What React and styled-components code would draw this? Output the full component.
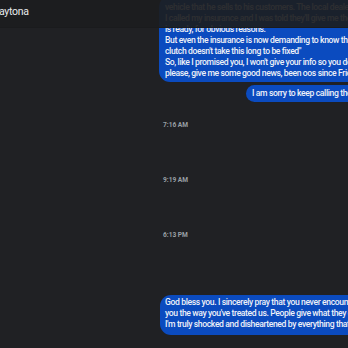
import React from "react";
import styled, { createGlobalStyle } from "styled-components";

const GlobalStyle = createGlobalStyle`
  html, body {
    margin: 0;
    padding: 0;
    background: #202124;
  }
  body {
    font-family: Roboto, "Noto Sans", sans-serif;
  }
`;

const topLines = [
  "vehicle that he sells to his customers. The local dealer already told me",
  "I called my insurance and I was told they'll give me the car back",
  "is ready, for obvious reasons.",
  "But even the insurance is now demanding to know the last update",
  "clutch doesn't take this long to be fixed\"",
  "So, like I promised you, I won't give your info so you don't get",
  "please, give me some good news, been oos since Friday",
];

const lastLines = [
  "God bless you. I sincerely pray that you never encounter anyone who treats",
  "you the way you've treated us. People give what they can give and",
  "I'm truly shocked and disheartened by everything that just happened",
];

function App() {
  return (
    <>
      <GlobalStyle />
      <Screen>
        <Header>
          <Title>aytona</Title>
        </Header>
        <Thread>
          <Bubble $kind="top">
            {topLines.map((l) => (
              <Line key={l}>{l}</Line>
            ))}
          </Bubble>
          <Bubble $kind="short">
            <Line>I am sorry to keep calling the shop about this</Line>
          </Bubble>
          <Stamp $gap={18.5}>7:16 AM</Stamp>
          <Stamp $gap={46}>9:19 AM</Stamp>
          <Stamp $gap={46}>6:13 PM</Stamp>
          <Bubble $kind="last">
            {lastLines.map((l) => (
              <Line key={l}>{l}</Line>
            ))}
          </Bubble>
        </Thread>
      </Screen>
    </>
  );
}

const Screen = styled.div`
  position: relative;
  width: 348px;
  height: 348px;
  overflow: hidden;
  background: #202124;
`;

const Header = styled.div`
  position: absolute;
  top: 0;
  left: 0;
  right: 0;
  height: 27px;
  background: rgba(28, 29, 32, 0.92);
  border-bottom: 1px solid #1a1b1d;
  display: flex;
  align-items: center;
  z-index: 2;
`;

const Title = styled.div`
  margin-left: -1px;
  margin-top: -5px;
  color: #e8eaed;
  font-size: 10.5px;
  letter-spacing: -0.3px;
`;

const Thread = styled.div`
  display: flex;
  flex-direction: column;
  align-items: flex-start;
  margin-top: -4px;
`;

const bubbleBox = {
  top: { left: 159, top: 0, pad: "5.5px 6px 3.5px 6px" },
  short: { left: 246, top: 3, pad: "3px 6px 3px 6px" },
  last: { left: 160, top: 55.5, pad: "2px 6px 5px 5px" },
};

const Bubble = styled.div`
  background: #0b4bbf;
  color: #eef1f8;
  border-radius: 11px;
  width: 420px;
  font-size: 8.6px;
  font-weight: 500;
  line-height: 11px;
  letter-spacing: -0.38px;
  margin-left: ${(p) => bubbleBox[p.$kind].left}px;
  margin-top: ${(p) => bubbleBox[p.$kind].top}px;
  padding: ${(p) => bubbleBox[p.$kind].pad};
`;

const Line = styled.div`
  white-space: nowrap;
`;

const Stamp = styled.div`
  margin-left: 163px;
  margin-top: ${(p) => p.$gap}px;
  color: #9aa0a6;
  font-size: 6.6px;
  font-weight: 700;
  line-height: 9px;
`;

export default App;
